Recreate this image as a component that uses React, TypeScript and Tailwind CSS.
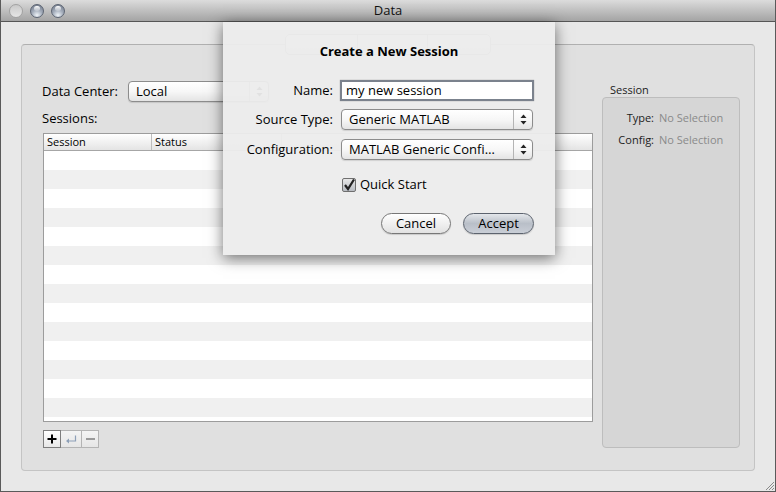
import React from "react";

const Stepper: React.FC = () => (
  <div className="flex w-[19px] items-center justify-center border-l border-[#b4b4b4]">
    <svg width="7" height="11" viewBox="0 0 7 11">
      <path d="M3.5 0.5 L6.5 4 L0.5 4 Z" fill="#222" />
      <path d="M3.5 10.5 L6.5 7 L0.5 7 Z" fill="#222" />
    </svg>
  </div>
);

const Popup: React.FC<{ label: string; className?: string }> = ({ label, className }) => (
  <div
    className={
      "flex h-[21px] items-stretch rounded-[4px] border border-[#8c8c8c] bg-gradient-to-b from-white via-[#f7f7f7] to-[#e4e4e4] shadow-[0_1px_1px_rgba(0,0,0,0.12)] " +
      (className ?? "")
    }
  >
    <div className="flex flex-1 items-center overflow-hidden whitespace-nowrap pl-[7px] text-[13px] text-black">
      {label}
    </div>
    <Stepper />
  </div>
);

const Light: React.FC<{ dim?: boolean }> = ({ dim }) =>
  dim ? (
    <div className="h-[14px] w-[14px] rounded-full border border-[#a2a2a2] bg-gradient-to-b from-[#c9c9c9] to-[#e6e6e6]" />
  ) : (
    <div className="relative h-[14px] w-[14px] rounded-full border border-[#5d6573] bg-[radial-gradient(circle_at_50%_85%,#eef3f8_0%,#a3acba_45%,#6b7484_100%)]">
      <div className="absolute left-[3px] top-[1px] h-[5px] w-[6px] rounded-full bg-gradient-to-b from-white to-white/20" />
    </div>
  );

const PillButton: React.FC<{ label: string; primary?: boolean; className?: string }> = ({ label, primary, className }) => (
  <div
    className={
      "flex h-[21px] items-center justify-center rounded-full border text-[13px] text-black shadow-[0_1px_1px_rgba(0,0,0,0.15)] " +
      (primary
        ? "border-[#5c636e] bg-gradient-to-b from-[#e4e7eb] via-[#b9bfc8] to-[#c9ced6] "
        : "border-[#777] bg-gradient-to-b from-white via-[#f0f0f0] to-[#e2e2e2] ") +
      (className ?? "")
    }
  >
    {label}
  </div>
);

const rows = Array.from({ length: 15 }, (_, i) => i);

const App: React.FC = () => {
  return (
    <div className="relative flex h-[492px] w-[776px] flex-col overflow-hidden border-x border-b border-[#5a5a5a] bg-[#e8e8e8] font-['Open_Sans','DejaVu_Sans',sans-serif] text-black">
      {/* title bar */}
      <div className="relative flex h-[22px] shrink-0 items-center border-b border-[#565656] bg-gradient-to-b from-[#dcdcdc] to-[#a4a4a4]">
        <div className="flex items-center gap-[7px] pl-[8px]">
          <Light dim />
          <Light />
          <Light />
        </div>
        <div className="absolute inset-x-0 top-0 flex h-[21px] items-center justify-center text-[13px] text-[#111]">
          Data
        </div>
      </div>

      {/* body */}
      <div className="flex flex-1 px-[20px] pt-[22px]">
        <div className="relative flex h-[427px] w-[734px] rounded-[4px] border border-[#c4c4c4] border-t-[#b0b0b0] bg-[#e0e0e0]">
          {/* tabs (hidden behind the sheet) */}
          <div className="absolute -top-[11px] left-1/2 flex h-[21px] -translate-x-1/2 overflow-hidden rounded-[5px] border border-[#9a9a9a] bg-gradient-to-b from-white to-[#e6e6e6]">
            <div className="w-[72px] border-r border-[#b0b0b0]" />
            <div className="w-[70px] border-r border-[#b0b0b0]" />
            <div className="w-[62px]" />
          </div>

          {/* left column */}
          <div className="flex w-[580px] flex-col pl-[21px] pt-[36px]">
            <div className="flex h-[21px] items-center">
              <span className="-ml-px w-[86px] text-[13px]">Data Center:</span>
              <Popup label="Local" className="w-[141px]" />
            </div>
            <div className="mt-[8px] -ml-px text-[13px] leading-[16px]">Sessions:</div>
            <div className="mt-[7px] flex h-[289px] w-[550px] flex-col overflow-hidden border border-[#9c9c9c] bg-white">
              <div className="flex h-[17px] shrink-0 border-b border-[#a6a6a6] bg-gradient-to-b from-white to-[#e4e4e4] text-[11px] leading-[16px]">
                <div className="w-[108px] border-r border-[#bdbdbd] pl-[3px]">Session</div>
                <div className="w-[130px] border-r border-[#bdbdbd] pl-[3px]">Status</div>
                <div className="flex-1" />
              </div>
              {rows.map((i) => (
                <div key={i} className={"h-[19px] shrink-0 " + (i % 2 === 1 ? "bg-[#f0f0f0]" : "bg-white")} />
              ))}
            </div>
            <div className="mt-[8px] flex h-[18px]">
              <div className="flex w-[18px] items-center justify-center border border-[#7e7e7e] bg-gradient-to-b from-white to-[#e8e8e8]">
                <svg width="10" height="10" viewBox="0 0 10 10">
                  <path d="M5 0.5 V9.5 M0.5 5 H9.5" stroke="#000" strokeWidth="2" />
                </svg>
              </div>
              <div className="flex w-[21px] items-center justify-center border-y border-r border-[#b4b4b4] bg-gradient-to-b from-[#f4f4f4] to-[#e6e6e6]">
                <svg width="12" height="9" viewBox="0 0 12 9">
                  <path d="M10.5 0.5 V6 H2" stroke="#8ea0b8" strokeWidth="1.2" fill="none" />
                  <path d="M1 6 L4 3.5 V8.5 Z" fill="#8ea0b8" />
                </svg>
              </div>
              <div className="flex w-[17px] items-center justify-center border-y border-r border-[#b4b4b4] bg-gradient-to-b from-[#f4f4f4] to-[#e6e6e6]">
                <div className="h-[2px] w-[9px] bg-[#9a9a9a]" />
              </div>
            </div>
          </div>

          {/* right column */}
          <div className="flex w-[138px] flex-col pt-[38px]">
            <div className="pl-[8px] text-[11px] leading-[13px] text-[#222]">Session</div>
            <div className="mt-[1px] flex h-[351px] flex-col gap-[8px] rounded-[4px] border border-[#bdbdbd] bg-[#d6d6d6] pt-[13px] text-[11px] leading-[14px]">
              <div className="flex">
                <span className="w-[51px] text-right text-[#222]">Type:</span>
                <span className="pl-[5px] text-[#8a8a8a]">No Selection</span>
              </div>
              <div className="flex">
                <span className="w-[51px] text-right text-[#222]">Config:</span>
                <span className="pl-[5px] text-[#8a8a8a]">No Selection</span>
              </div>
            </div>
          </div>
        </div>
      </div>

      {/* resize grip */}
      <svg className="absolute bottom-0 right-0" width="12" height="12" viewBox="0 0 12 12">
        <path d="M11 3 L3 11 M11 6 L6 11 M11 9 L9 11" stroke="#8a8a8a" strokeWidth="1" />
      </svg>

      {/* sheet */}
      <div className="absolute left-[222px] top-[22px] flex h-[233px] w-[332px] flex-col bg-[rgba(236,236,236,0.95)] shadow-[0_3px_14px_rgba(0,0,0,0.55)]">
        <div className="pt-[21px] text-center text-[13px] font-bold leading-[16px]">Create a New Session</div>

        <div className="mt-[21px] flex h-[21px] items-center">
          <span className="w-[110px] text-right text-[13px]">Name:</span>
          <div className="ml-[7px] flex h-[21px] w-[194px] items-center border-2 border-[#7b828d] bg-white pl-[4px] text-[13px] shadow-[0_0_1px_rgba(0,0,0,0.4)]">
            my new session
          </div>
        </div>

        <div className="mt-[8px] flex h-[21px] items-center">
          <span className="w-[110px] text-right text-[13px]">Source Type:</span>
          <Popup label="Generic MATLAB" className="ml-[8px] w-[192px]" />
        </div>

        <div className="mt-[9px] flex h-[21px] items-center">
          <span className="w-[110px] text-right text-[13px]">Configuration:</span>
          <Popup label="MATLAB Generic Confi…" className="ml-[8px] w-[192px]" />
        </div>

        <div className="mt-[17px] flex h-[16px] items-center pl-[119px]">
          <div className="flex h-[14px] w-[14px] items-center justify-center rounded-[2px] border border-[#6f6f6f] bg-gradient-to-b from-[#e8e8e8] to-[#b8bcc2]">
            <svg width="12" height="12" viewBox="0 0 12 12">
              <path d="M2 6 L5 10 L11 0.5" stroke="#222" strokeWidth="2.2" fill="none" />
            </svg>
          </div>
          <span className="pl-[4px] text-[13px]">Quick Start</span>
        </div>

        <div className="mt-[20px] flex justify-end gap-[12px] pr-[21px]">
          <PillButton label="Cancel" className="w-[70px]" />
          <PillButton label="Accept" primary className="w-[71px]" />
        </div>
      </div>
    </div>
  );
};

export default App;
